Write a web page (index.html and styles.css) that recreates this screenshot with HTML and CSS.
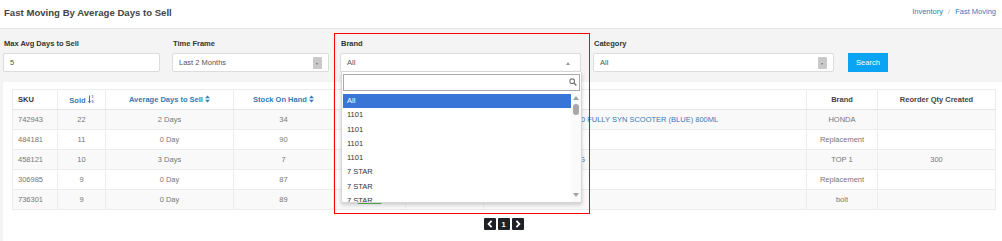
FILE: index.html
```html
<!DOCTYPE html>
<html>
<head>
    <meta charset="utf-8" />
    <title>Fast Moving By Average Days to Sell</title>
    <link rel="stylesheet" href="styles.css">
</head>
<body>
    <div class="page-head">
        <h1>Fast Moving By Average Days to Sell</h1>
        <ol class="crumbs">
            <li><a href="#">Inventory</a></li>
            <li class="sep">/</li>
            <li><a href="#">Fast Moving</a></li>
        </ol>
    </div>

    <div class="filters">
        <div class="field f-days">
            <label>Max Avg Days to Sell</label>
            <div class="box">5</div>
        </div>
        <div class="field f-time">
            <label>Time Frame</label>
            <div class="box">Last 2 Months<span class="caret"><i></i></span></div>
        </div>
        <div class="field f-brand">
            <label>Brand</label>
            <div class="box open">All<span class="up"></span></div>

            <!-- opened select2 list -->
            <div class="drop">
                <div class="drop-search">
                    <svg width="8" height="8" viewBox="0 0 8 8"><circle cx="3.2" cy="3.2" r="2.3" fill="none" stroke="#777" stroke-width="1.1"/><path d="M4.9 4.9 L7.4 7.4" stroke="#777" stroke-width="1.4"/></svg>
                </div>
                <div class="drop-body">
                    <ul class="drop-list">
                        <li class="hl">All</li>
                        <li>1101</li>
                        <li>1101</li>
                        <li>1101</li>
                        <li>1101</li>
                        <li>7 STAR</li>
                        <li>7 STAR</li>
                        <li>7 STAR</li>
                    </ul>
                    <div class="scroll">
                        <span class="sc-up"></span>
                        <span class="sc-thumb"></span>
                        <span class="sc-down"></span>
                    </div>
                </div>
            </div>
            <div class="mark"></div>
        </div>
        <div class="field f-cat">
            <label>Category</label>
            <div class="box">All<span class="caret"><i></i></span></div>
        </div>
        <a href="#" class="btn-search">Search</a>
    </div>

    <div class="panel">
        <table class="grid">
            <colgroup>
                <col style="width:45px"><col style="width:48px"><col style="width:128px"><col style="width:100px">
                <col style="width:72px"><col style="width:78px"><col style="width:323px"><col style="width:71px"><col style="width:118px">
            </colgroup>
            <thead>
                <tr>
                    <th class="l">SKU</th>
                    <th><a href="#">Sold <svg class="num" width="6" height="9" viewBox="0 0 6 9"><path d="M1.5 0.5 V7.5" stroke="#337ab7" stroke-width="1"/><path d="M0 6 L1.5 8.5 L3 6 Z" fill="#337ab7"/><text x="3.4" y="3.4" font-size="3.6" fill="#337ab7" font-family="Liberation Sans">1</text><text x="3.4" y="8.4" font-size="3.6" fill="#337ab7" font-family="Liberation Sans">9</text></svg></a></th>
                    <th><a href="#">Average Days to Sell <svg class="srt" width="5" height="8" viewBox="0 0 5 8"><path d="M0 3.3 L2.5 0.5 L5 3.3 Z M0 4.7 L2.5 7.5 L5 4.7 Z" fill="#337ab7"/></svg></a></th>
                    <th><a href="#">Stock On Hand <svg class="srt" width="5" height="8" viewBox="0 0 5 8"><path d="M0 3.3 L2.5 0.5 L5 3.3 Z M0 4.7 L2.5 7.5 L5 4.7 Z" fill="#337ab7"/></svg></a></th>
                    <th></th>
                    <th></th>
                    <th></th>
                    <th>Brand</th>
                    <th>Reorder Qty Created</th>
                </tr>
            </thead>
            <tbody>
                <tr>
                    <td class="l">742943</td><td>22</td><td>2 Days</td><td>34</td>
                    <td><span class="tag"></span></td><td></td>
                    <td class="l desc"><a href="#">HONDA PRO OIL 10W-30 FULLY SYN SCOOTER (BLUE) 800ML</a></td>
                    <td>HONDA</td><td></td>
                </tr>
                <tr>
                    <td class="l">484181</td><td>11</td><td>0 Day</td><td>90</td>
                    <td><span class="tag"></span></td><td></td>
                    <td class="l desc"></td>
                    <td>Replacement</td><td></td>
                </tr>
                <tr>
                    <td class="l">458121</td><td>10</td><td>3 Days</td><td>7</td>
                    <td><span class="tag"></span></td><td></td>
                    <td class="l desc"><a href="#">TOP 1 EP GREASE 500G</a></td>
                    <td>TOP 1</td><td>300</td>
                </tr>
                <tr>
                    <td class="l">306985</td><td>9</td><td>0 Day</td><td>87</td>
                    <td><span class="tag"></span></td><td></td>
                    <td class="l desc"></td>
                    <td>Replacement</td><td></td>
                </tr>
                <tr>
                    <td class="l">736301</td><td>9</td><td>0 Day</td><td>89</td>
                    <td><span class="tag"></span></td><td></td>
                    <td class="l desc"></td>
                    <td>bolt</td><td></td>
                </tr>
            </tbody>
        </table>

        <ul class="pager">
            <li><a href="#"><svg width="6" height="8" viewBox="0 0 6 8"><path d="M4.6 0.8 L1.6 4 L4.6 7.2" fill="none" stroke="#fff" stroke-width="1.8"/></svg></a></li>
            <li><a href="#">1</a></li>
            <li><a href="#"><svg width="6" height="8" viewBox="0 0 6 8"><path d="M1.4 0.8 L4.4 4 L1.4 7.2" fill="none" stroke="#fff" stroke-width="1.8"/></svg></a></li>
        </ul>
    </div>
</body>
</html>
```

FILE: styles.css
```css
html, body {
    margin: 0;
    padding: 0;
}

body {
    background: #f4f4f4;
    font-family: "Liberation Sans", Arial, sans-serif;
    font-size: 7.5px;
    color: #555;
    height: 241px;
    overflow: hidden;
}

a {
    color: #337ab7;
    text-decoration: none;
}

ul, ol {
    list-style: none;
    margin: 0;
    padding: 0;
}

.page-head {
    height: 28px;
    background: #fff;
    border-bottom: 1px solid #e7e7e7;
    display: flex;
    align-items: center;
    justify-content: space-between;
    padding: 0 6px 0 4px;
}

    .page-head h1 {
        margin: 0;
        font-size: 9.6px;
        font-weight: bold;
        color: #444;
        position: relative;
        top: -2px;
    }

.crumbs {
    display: flex;
    position: relative;
    top: -3px;
}

    .crumbs .sep {
        color: #bbb;
        padding: 0 5px;
    }

.filters {
    display: flex;
    align-items: flex-end;
    padding: 9px 0 10px 3px;
}

.field {
    position: relative;
}

    .field label {
        display: block;
        height: 11px;
        line-height: 11px;
        margin: 0 0 4px 1px;
        font-weight: bold;
        color: #333;
    }

.f-days { width: 157px; }
.f-time { width: 157px; margin-left: 12px; }
.f-brand { width: 241px; margin-left: 11px; }
.f-cat { width: 241px; margin-left: 12px; }

.box {
    height: 19px;
    line-height: 17px;
    box-sizing: border-box;
    border: 1px solid #dcdcdc;
    border-radius: 2px;
    background: #fff;
    padding-left: 6px;
    color: #555;
    position: relative;
}

    .box .caret {
        position: absolute;
        right: 6px;
        top: 3px;
        width: 9px;
        height: 12px;
        background: #c9c9c9;
        border-radius: 1px;
    }

        .box .caret i {
            position: absolute;
            left: 3px;
            top: 6px;
            border-left: 1.5px solid transparent;
            border-right: 1.5px solid transparent;
            border-top: 2px solid #777;
        }

    .box .up {
        position: absolute;
        right: 10px;
        top: 8px;
        border-left: 2px solid transparent;
        border-right: 2px solid transparent;
        border-bottom: 3px solid #999;
    }

    .box.open {
        border-bottom-left-radius: 0;
        border-bottom-right-radius: 0;
    }

.btn-search {
    display: block;
    width: 40px;
    height: 19px;
    line-height: 19px;
    margin-left: 14px;
    background: #0ba3f3;
    color: #fff;
    text-align: center;
}

/* opened dropdown */
.drop {
    position: absolute;
    left: 1px;
    top: 34px;
    width: 241px;
    height: 131px;
    box-sizing: border-box;
    background: #fff;
    border: 1px solid #d6d6d6;
    border-top: none;
    box-shadow: 0 2px 4px rgba(0, 0, 0, 0.18);
    z-index: 10;
    overflow: hidden;
}

.drop-search {
    height: 17px;
    margin: 2px 1px 3px 1px;
    box-sizing: border-box;
    border: 1px solid #aaa;
    position: relative;
}

    .drop-search svg {
        position: absolute;
        right: 2px;
        top: 3px;
    }

.drop-body {
    display: flex;
    height: 108px;
}

.drop-list {
    flex: 1;
    margin-left: 1px;
    overflow: hidden;
}

    .drop-list li {
        height: 14.3px;
        line-height: 14.3px;
        padding-left: 4px;
        color: #333;
    }

        .drop-list li.hl {
            background: #3875d7;
            color: #fff;
        }

.scroll {
    width: 10px;
    position: relative;
    background: #fafafa;
}

    .scroll .sc-up {
        position: absolute;
        left: 2px;
        top: 2px;
        border-left: 3px solid transparent;
        border-right: 3px solid transparent;
        border-bottom: 4px solid #a3a3a3;
    }

    .scroll .sc-thumb {
        position: absolute;
        left: 2px;
        top: 10px;
        width: 6px;
        height: 11px;
        border-radius: 3px;
        background: #a8a8a8;
    }

    .scroll .sc-down {
        position: absolute;
        left: 2px;
        bottom: 5px;
        border-left: 3px solid transparent;
        border-right: 3px solid transparent;
        border-top: 4px solid #a3a3a3;
    }

/* annotation frame */
.mark {
    position: absolute;
    left: -6px;
    top: -5px;
    width: 256px;
    height: 181px;
    box-sizing: border-box;
    border: 1px solid #f00;
    z-index: 11;
    pointer-events: none;
}

/* result panel */
.panel {
    background: #fff;
    margin-left: 3px;
    padding: 7px 7px 20px 9px;
}

.grid {
    width: 983px;
    table-layout: fixed;
    border-collapse: collapse;
    border: 1px solid #e8e8e8;
}

    .grid th, .grid td {
        height: 20px;
        padding: 0 5px;
        border: 1px solid #ececec;
        text-align: center;
        white-space: nowrap;
        overflow: hidden;
        box-sizing: border-box;
    }

    .grid th {
        font-weight: bold;
        color: #444;
        background: #fff;
        border-bottom: 1px solid #e4e4e4;
    }

    .grid td {
        color: #777;
    }

    .grid .l {
        text-align: left;
    }

    .grid th.l:first-child {
        color: #333;
    }

    .grid tbody tr:nth-child(odd) td {
        background: #f9f9f9;
    }

    .grid td.desc {
        padding-left: 14px;
    }

    .grid svg {
        vertical-align: -1px;
    }

.tag {
    display: inline-block;
    vertical-align: middle;
    width: 25px;
    height: 11px;
    background: #5cb85c;
    border-radius: 2px;
    position: relative;
    top: -1px;
}

.pager {
    display: flex;
    justify-content: center;
    gap: 2px;
    margin-top: 8px;
}

    .pager a {
        display: flex;
        align-items: center;
        justify-content: center;
        width: 12px;
        height: 12px;
        background: #1e2226;
        color: #fff;
        border-radius: 1px;
        font-weight: bold;
    }
```
